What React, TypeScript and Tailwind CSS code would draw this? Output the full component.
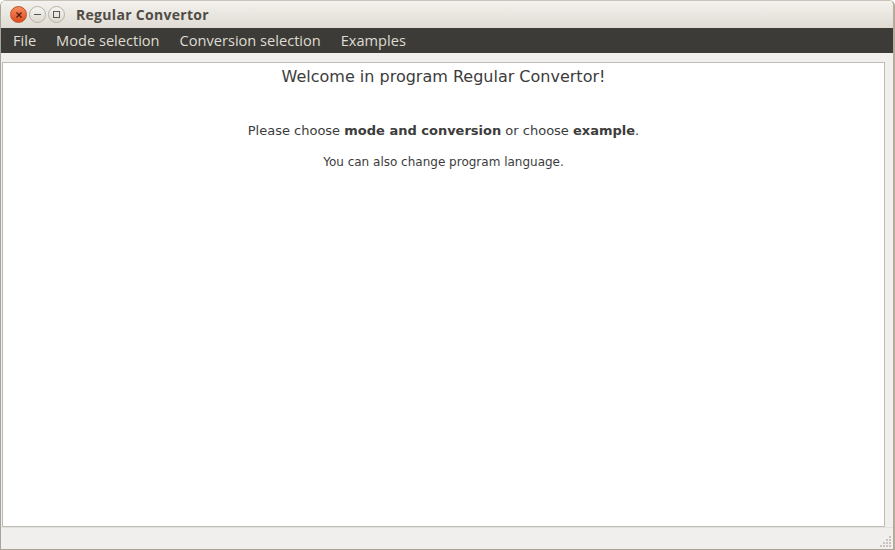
const menu = ["File", "Mode selection", "Conversion selection", "Examples"];

function WindowButton({ kind }: { kind: "close" | "min" | "max" }) {
  if (kind === "close") {
    return (
      <div className="w-[17px] h-[17px] rounded-full bg-gradient-to-b from-[#f58a5d] to-[#df4a1a] border border-[#b9532c] grid place-items-center">
        <svg width="8" height="8" viewBox="0 0 8 8">
          <path d="M1.5 1.5 L6.5 6.5 M6.5 1.5 L1.5 6.5" stroke="#4a1c0c" strokeWidth="1.2" />
        </svg>
      </div>
    );
  }
  return (
    <div className="w-[17px] h-[17px] rounded-full bg-gradient-to-b from-[#f7f6f3] to-[#dcd8cf] border border-[#b8b3a9] grid place-items-center">
      <svg width="9" height="9" viewBox="0 0 9 9">
        {kind === "min" ? (
          <path d="M1 4.5 L8 4.5" stroke="#5a5852" strokeWidth="1" />
        ) : (
          <rect x="1.5" y="1.5" width="6" height="6" fill="none" stroke="#5a5852" strokeWidth="1" />
        )}
      </svg>
    </div>
  );
}

function Grip() {
  const dots = [
    [9, 0], [9, 3], [6, 3], [9, 6], [6, 6], [3, 6], [9, 9], [6, 9], [3, 9], [0, 9],
  ];
  return (
    <svg width="11" height="11" viewBox="0 0 11 11">
      {dots.map(([x, y], i) => (
        <rect key={i} x={x} y={y} width="2" height="2" fill="#c9c5bd" />
      ))}
    </svg>
  );
}

export default function App() {
  return (
    <div className="w-[895px] h-[550px] flex flex-col bg-[#f0efed] border-r-2 border-[#b5ab9c] border-l border-l-[#a8a49c] border-b border-b-[#a8a49c] overflow-hidden rounded-t-[6px] font-['DejaVu_Sans',sans-serif]">
      <div className="h-[28px] shrink-0 flex items-center bg-gradient-to-b from-[#f4f2ee] to-[#dfdbd3] border-t border-[#c8c2b8]">
        <div className="flex items-center gap-[2px] pl-[9px]">
          <WindowButton kind="close" />
          <WindowButton kind="min" />
          <WindowButton kind="max" />
        </div>
        <div className="ml-[11px] text-[14px] font-bold text-[#4f4c46] font-['Open_Sans',sans-serif] tracking-[0.3px]">
          Regular Convertor
        </div>
      </div>
      <div className="h-[25px] shrink-0 flex items-center bg-[#3c3b37] pl-[12px] gap-[20px] font-['Open_Sans',sans-serif] text-[14.6px] text-[#dfdbd2]">
        {menu.map(m => (
          <span key={m}>{m}</span>
        ))}
      </div>
      <div className="flex-1 flex flex-col pt-[9px] pl-[1px] pr-[8px]">
        <div className="flex-1 bg-white border border-[#bfbcb6] flex flex-col items-center text-[#3c3c3c]">
          <div className="mt-[4px] text-[16px] leading-[20px]">Welcome in program Regular Convertor!</div>
          <div className="mt-[36px] text-[13px] leading-[16px]">
            Please choose <b>mode and conversion</b> or choose <b>example</b>.
          </div>
          <div className="mt-[15px] text-[12px] leading-[16px]">You can also change program language.</div>
        </div>
      </div>
      <div className="h-[22px] shrink-0 flex items-end justify-end pr-[2px] pb-[2px] border-t border-[#e3e1dd]">
        <Grip />
      </div>
    </div>
  );
}
